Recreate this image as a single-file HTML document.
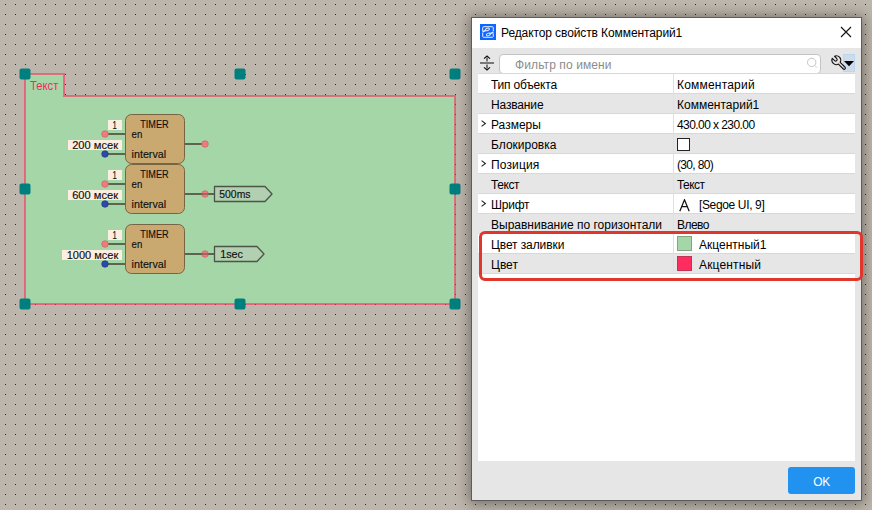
<!DOCTYPE html>
<html><head><meta charset="utf-8">
<style>
html,body{margin:0;padding:0;width:872px;height:510px;overflow:hidden;background:#bdb6ac;font-family:"Liberation Sans",sans-serif;}
#cv{position:absolute;left:0;top:0;}
.t{position:absolute;white-space:pre;font-size:12px;color:#000;}
#dlg{position:absolute;left:471px;top:17px;width:389px;height:482px;border:1px solid #5c5c5c;background:#e6e6e6;box-shadow:0 1px 12px 2px rgba(30,25,20,0.45);}
#title{position:absolute;left:0;top:0;width:389px;height:30px;background:#fff;}
#tbl{position:absolute;left:6px;top:56px;width:377px;height:387px;background:#fff;}
.row{position:absolute;left:0;width:377px;height:19px;border-bottom:1px solid #d8d8d8;}
.g{background:#e6e6e6;}
.lbl{position:absolute;left:13px;top:1px;line-height:20px;font-size:12px;white-space:pre;}
.val{position:absolute;left:199px;top:1px;line-height:20px;font-size:12px;white-space:pre;}
.vline{position:absolute;left:195px;top:0;width:1px;height:200px;background:#e0e0e0;}

#search{position:absolute;left:27px;top:36px;width:320px;height:18px;background:#fff;border:1px solid #c4c4c4;border-radius:4px;}
#search .ph{position:absolute;left:15px;top:3px;letter-spacing:0.1px;font-size:12px;color:#8c8c8c;white-space:pre;}
#dd{position:absolute;left:371px;top:36px;width:10px;height:16px;background:#cddcea;border:1px solid #bad6f0;}
#tline{position:absolute;left:0;top:-1px;width:377px;height:1px;background:#d8d8d8;}
.chev{position:absolute;left:3px;top:6px;}
.cb{position:absolute;left:199px;top:4px;width:11px;height:11px;border:1px solid #222;background:#fff;}
.aglyph{position:absolute;left:201px;top:5px;}
.sw{position:absolute;left:199px;top:2px;width:13px;height:13px;border:1px solid rgba(70,70,70,0.35);box-sizing:content-box;}
#hl{position:absolute;left:7px;top:213px;width:378px;height:44px;border:3px solid #e0362c;border-radius:6px;}
#ok{position:absolute;left:316px;top:449px;width:67px;height:27px;background:#2192ef;border-radius:3px;color:#fff;font-size:12px;line-height:30px;text-align:center;letter-spacing:-0.4px;}
</style></head><body>
<svg id="cv" width="872" height="510">
<defs>
<pattern id="dots" x="0" y="0" width="10" height="10" patternUnits="userSpaceOnUse">
<rect x="5" y="4" width="1" height="1" fill="#2d2822"/>
</pattern>
</defs>
<rect x="0" y="0" width="872" height="510" fill="url(#dots)"/>
<!-- comment shape -->
<path d="M25 74 H64 V96 H455 V304 H25 Z" fill="#a5d6a7"/>
<path d="M25 74 H64 V96 H455 V304 H25 Z" fill="none" stroke="rgba(255,45,95,0.58)" stroke-width="2"/>
<text x="30" y="90" font-family="Liberation Sans" font-size="12" fill="#f02d62" textLength="28.4" lengthAdjust="spacingAndGlyphs">Текст</text>
<!-- handles -->
<g fill="#007f7f">
<rect x="19.5" y="68.5" width="11" height="11" rx="2"/>
<rect x="234.5" y="68.5" width="11" height="11" rx="2"/>
<rect x="449.5" y="68.5" width="11" height="11" rx="2"/>
<rect x="19.5" y="183.5" width="11" height="11" rx="2"/>
<rect x="449.5" y="183.5" width="11" height="11" rx="2"/>
<rect x="19.5" y="298.5" width="11" height="11" rx="2"/>
<rect x="234.5" y="298.5" width="11" height="11" rx="2"/>
<rect x="449.5" y="298.5" width="11" height="11" rx="2"/>
</g>
<!-- timers -->
<g id="timers" font-family="Liberation Sans" font-size="10.5" fill="#101010" stroke="#101010" stroke-width="0.15">
<g>
<line x1="105" y1="134" x2="125" y2="134" stroke="#5e6450" stroke-width="2"/>
<line x1="105" y1="154" x2="125" y2="154" stroke="#5e6450" stroke-width="2"/>
<rect x="125.5" y="114.5" width="59" height="49" rx="6" fill="#c9a970" stroke="#786444" stroke-width="1"/>
<text x="140.2" y="127.8" textLength="28.4" lengthAdjust="spacingAndGlyphs">TIMER</text>
<text x="131.6" y="137.9" textLength="10.7" lengthAdjust="spacingAndGlyphs">en</text>
<text x="131.6" y="157.5" textLength="34.5" lengthAdjust="spacingAndGlyphs">interval</text>
<rect x="108" y="120" width="14" height="10" fill="#fcefe1" stroke="none"/>
<text x="112.6" y="128.6" textLength="4.3" lengthAdjust="spacingAndGlyphs">1</text>
<rect x="68" y="140" width="54" height="10" fill="#fcefe1" stroke="none"/>
<text x="72.2" y="148.5" textLength="45.8" lengthAdjust="spacingAndGlyphs">200 мсек</text>
<circle cx="105" cy="134" r="3.3" fill="#f07b7b" stroke="#c06060" stroke-width="0.6"/>
<circle cx="105" cy="154" r="3.3" fill="#2e4aa8" stroke="#203070" stroke-width="0.6"/>
</g>
<g>
<line x1="105" y1="184" x2="125" y2="184" stroke="#5e6450" stroke-width="2"/>
<line x1="105" y1="204" x2="125" y2="204" stroke="#5e6450" stroke-width="2"/>
<rect x="125.5" y="164.5" width="59" height="49" rx="6" fill="#c9a970" stroke="#786444" stroke-width="1"/>
<text x="140.2" y="177.8" textLength="28.4" lengthAdjust="spacingAndGlyphs">TIMER</text>
<text x="131.6" y="187.9" textLength="10.7" lengthAdjust="spacingAndGlyphs">en</text>
<text x="131.6" y="207.5" textLength="34.5" lengthAdjust="spacingAndGlyphs">interval</text>
<rect x="108" y="170" width="14" height="10" fill="#fcefe1" stroke="none"/>
<text x="112.6" y="178.6" textLength="4.3" lengthAdjust="spacingAndGlyphs">1</text>
<rect x="68" y="190" width="54" height="10" fill="#fcefe1" stroke="none"/>
<text x="72.2" y="198.5" textLength="45.8" lengthAdjust="spacingAndGlyphs">600 мсек</text>
<circle cx="105" cy="184" r="3.3" fill="#f07b7b" stroke="#c06060" stroke-width="0.6"/>
<circle cx="105" cy="204" r="3.3" fill="#2e4aa8" stroke="#203070" stroke-width="0.6"/>
</g>
<g>
<line x1="105" y1="244" x2="125" y2="244" stroke="#5e6450" stroke-width="2"/>
<line x1="105" y1="264" x2="125" y2="264" stroke="#5e6450" stroke-width="2"/>
<rect x="125.5" y="224.5" width="59" height="49" rx="6" fill="#c9a970" stroke="#786444" stroke-width="1"/>
<text x="140.2" y="237.8" textLength="28.4" lengthAdjust="spacingAndGlyphs">TIMER</text>
<text x="131.6" y="247.9" textLength="10.7" lengthAdjust="spacingAndGlyphs">en</text>
<text x="131.6" y="267.5" textLength="34.5" lengthAdjust="spacingAndGlyphs">interval</text>
<rect x="108" y="230" width="14" height="10" fill="#fcefe1" stroke="none"/>
<text x="112.6" y="238.6" textLength="4.3" lengthAdjust="spacingAndGlyphs">1</text>
<rect x="62" y="250" width="60" height="10" fill="#fcefe1" stroke="none"/>
<text x="66.7" y="258.5" textLength="51.6" lengthAdjust="spacingAndGlyphs">1000 мсек</text>
<circle cx="105" cy="244" r="3.3" fill="#f07b7b" stroke="#c06060" stroke-width="0.6"/>
<circle cx="105" cy="264" r="3.3" fill="#2e4aa8" stroke="#203070" stroke-width="0.6"/>
</g>
<line x1="185" y1="144" x2="205" y2="144" stroke="#5e6450" stroke-width="2"/>
<circle cx="205" cy="144" r="3.3" fill="#f07b7b" stroke="#c06060" stroke-width="0.6"/>
<line x1="185" y1="194" x2="214" y2="194" stroke="#5e6450" stroke-width="2"/>
<circle cx="205" cy="194" r="3.3" fill="#f07b7b" stroke="#c06060" stroke-width="0.6"/>
<line x1="201" y1="194" x2="209" y2="194" stroke="#6a5a50" stroke-width="1.2"/>
<path d="M214.5 186.5 H265 L272 194 L265 201.5 H214.5 Z" fill="#b3cfb1" stroke="#4a5548" stroke-width="1.3" stroke-linejoin="round"/>
<text x="219.3" y="197.5" textLength="31.2" lengthAdjust="spacingAndGlyphs">500ms</text>
<line x1="185" y1="254" x2="214" y2="254" stroke="#5e6450" stroke-width="2"/>
<circle cx="205" cy="254" r="3.3" fill="#f07b7b" stroke="#c06060" stroke-width="0.6"/>
<line x1="201" y1="254" x2="209" y2="254" stroke="#6a5a50" stroke-width="1.2"/>
<path d="M214.5 246.5 H257 L264 254 L257 261.5 H214.5 Z" fill="#b3cfb1" stroke="#4a5548" stroke-width="1.3" stroke-linejoin="round"/>
<text x="220.2" y="257.5" textLength="22.8" lengthAdjust="spacingAndGlyphs">1sec</text>
</g>
</svg>

<div id="dlg">
  <div id="title">
    <svg style="position:absolute;left:8px;top:6px" width="16" height="16" viewBox="0 0 16 16">
      <rect width="16" height="16" fill="#0f66ff"/>
      <path d="M2.7 7.2 V3.7 Q2.7 2.7 3.7 2.7 H12.3 Q13.3 2.7 13.3 3.7 V7.3 M13.3 9.5 V12.3 Q13.3 13.3 12.3 13.3 H3.7 Q2.7 13.3 2.7 12.3 V8.7" fill="none" stroke="#e6eeff" stroke-width="1"/>
      <path d="M2.6 7.9 L6.0 6.2 M9.8 9.9 L13.4 8.2" stroke="#e6eeff" stroke-width="1.6" fill="none"/>
      <ellipse cx="7.5" cy="5.4" rx="2.0" ry="1.2" transform="rotate(-20 7.5 5.4)" fill="none" stroke="#e6eeff" stroke-width="1"/>
      <ellipse cx="8.3" cy="10.5" rx="2.0" ry="1.2" transform="rotate(-20 8.3 10.5)" fill="none" stroke="#e6eeff" stroke-width="1"/>
    </svg>
    <div class="t" style="left:29px;top:8px;letter-spacing:-0.1px">Редактор свойств Комментарий1</div>
    <svg style="position:absolute;left:368px;top:8px" width="12" height="12" viewBox="0 0 12 12">
      <path d="M1 1 L11 11 M11 1 L1 11" stroke="#111" stroke-width="1.1"/>
    </svg>
  </div>
  <svg style="position:absolute;left:7px;top:37px" width="16" height="16" viewBox="0 0 16 16">
    <rect x="1" y="7" width="14" height="2" fill="#787878"/>
    <rect x="7" y="2.5" width="2" height="4" fill="#787878"/><rect x="7" y="9.5" width="2" height="4" fill="#787878"/>
    <path d="M5 3.6 L8 1 L11 3.6 M5 12.4 L8 15 L11 12.4" fill="none" stroke="#111" stroke-width="1.2"/>
  </svg>
  <div id="search"><span class="ph">Фильтр по имени</span>
    <svg style="position:absolute;left:306px;top:2px" width="12" height="12" viewBox="0 0 12 12">
      <circle cx="5.7" cy="5.4" r="4.2" fill="none" stroke="#c6c6c6" stroke-width="1"/>
      <path d="M8.8 8.5 L10.8 10.5" stroke="#c6c6c6" stroke-width="1"/>
    </svg>
  </div>
  
  <div id="dd"><svg width="12" height="18" viewBox="0 0 12 18" style="position:absolute;left:0;top:0"><path d="M0 6 H10 L5 11.2 Z" fill="#000"/></svg></div>
  <div id="tbl">
    <div id="tline"></div>
    <div class="row" style="top:0px"><span class="lbl" style="letter-spacing:-0.2px">Тип объекта</span><span class="val" style="letter-spacing:0.2px">Комментарий</span></div>
    <div class="row g" style="top:20px"><span class="lbl" style="letter-spacing:-0.15px">Название</span><span class="val">Комментарий1</span></div>
    <div class="row" style="top:40px"><span class="lbl">Размеры</span><svg class="chev" width="6" height="8" viewBox="0 0 6 8"><path d="M0.6 0.6 L4.4 3.5 L0.6 6.4" fill="none" stroke="#222" stroke-width="1.1"/></svg><span class="val" style="letter-spacing:-0.57px">430.00 x 230.00</span></div>
    <div class="row g" style="top:60px"><span class="lbl">Блокировка</span><span class="cb"></span></div>
    <div class="row" style="top:80px"><span class="lbl" style="letter-spacing:0.15px">Позиция</span><svg class="chev" width="6" height="8" viewBox="0 0 6 8"><path d="M0.6 0.6 L4.4 3.5 L0.6 6.4" fill="none" stroke="#222" stroke-width="1.1"/></svg><span class="val" style="letter-spacing:-0.67px">(30, 80)</span></div>
    <div class="row g" style="top:100px"><span class="lbl" style="letter-spacing:-0.42px">Текст</span><span class="val" style="letter-spacing:-0.55px">Текст</span></div>
    <div class="row" style="top:120px"><span class="lbl" style="letter-spacing:-0.22px">Шрифт</span><svg class="chev" width="6" height="8" viewBox="0 0 6 8"><path d="M0.6 0.6 L4.4 3.5 L0.6 6.4" fill="none" stroke="#222" stroke-width="1.1"/></svg><svg class="aglyph" width="12" height="13" viewBox="0 0 12 13"><path d="M0.8 12.2 L5.5 0.8 L10.2 12.2 M2.7 7.5 H8.3" fill="none" stroke="#111" stroke-width="1.25"/></svg><span class="val" style="left:221px;letter-spacing:-0.36px">[Segoe UI, 9]</span></div>
    <div class="row g" style="top:140px"><span class="lbl">Выравнивание по горизонтали</span><span class="val" style="letter-spacing:-0.55px">Влево</span></div>
    <div class="row" style="top:160px"><span class="lbl" style="letter-spacing:-0.1px">Цвет заливки</span><span class="sw" style="background:#a5d6a7"></span><span class="val" style="left:221px">Акцентный1</span></div>
    <div class="row g" style="top:180px"><span class="lbl">Цвет</span><span class="sw" style="background:#ff2d5f"></span><span class="val" style="left:221px;letter-spacing:0.15px">Акцентный</span></div>
    <div class="vline"></div>
  </div>
  <div id="hl"></div>
  <div id="ok">OK</div>
</div>
<svg id="ov" style="position:absolute;left:0;top:0" width="872" height="510" viewBox="0 0 872 510">
<path id="wrench" d="M832.31 58.34 L834.60 60.62 A1.5 1.5 0 0 0 836.72 58.50 L834.44 56.21 A4.4 4.4 0 0 1 840.17 62.30 L845.10 67.24 A1.25 1.25 0 0 1 843.34 69.00 L838.40 64.07 A4.4 4.4 0 0 1 832.31 58.34 Z" fill="none" stroke="#111" stroke-width="1.1" stroke-linejoin="round"/>
</svg>
</body></html>
